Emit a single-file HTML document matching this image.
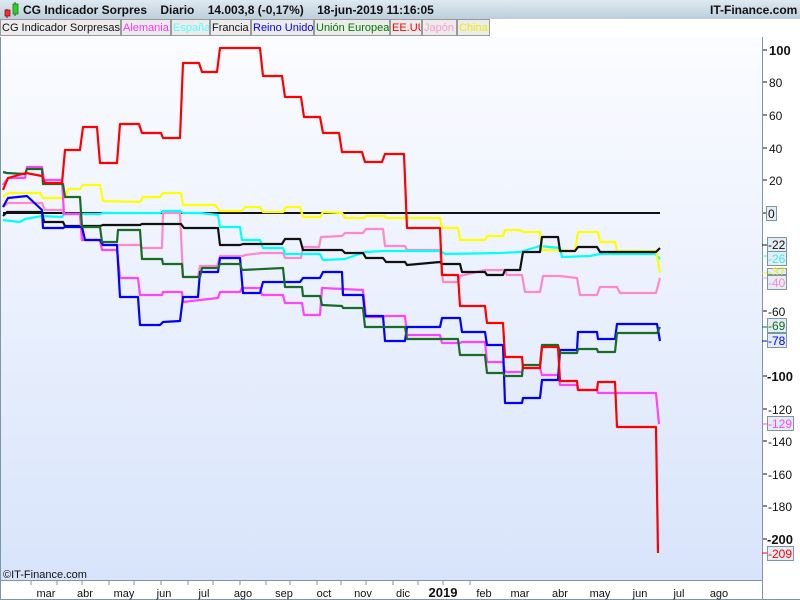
<!DOCTYPE html>
<html><head><meta charset="utf-8"><style>
html,body{margin:0;padding:0;width:800px;height:600px;overflow:hidden;background:#fff;font-family:"Liberation Sans",sans-serif}
#top{position:absolute;left:0;top:0;width:800px;height:19px;background:linear-gradient(#dfe9f1,#bccfdc);font-size:12px;font-weight:bold;color:#111;white-space:nowrap}
#leg{position:absolute;left:0;top:19px;width:800px;height:18px;background:#fff;font-size:11px;white-space:nowrap}
#leg span{position:absolute;top:0;height:17px;line-height:16px;border:1px solid #999;background:#ececec;padding:0 1px;box-sizing:border-box;overflow:hidden;white-space:nowrap}
</style></head><body>
<div id="top">
<svg width="20" height="19" style="position:absolute;left:2px;top:0"><line x1="5" y1="9" x2="5" y2="18" stroke="#600"/><rect x="3" y="10" width="5" height="6" fill="#e33" stroke="#800" stroke-width="0.7"/><line x1="13" y1="2" x2="13" y2="16" stroke="#060"/><rect x="11" y="4" width="5" height="10" fill="#3c3" stroke="#070" stroke-width="0.7"/></svg>
<span style="position:absolute;left:23px;top:3px">CG Indicador Sorpres &nbsp;&nbsp; Diario &nbsp;&nbsp; 14.003,8 (-0,17%) &nbsp;&nbsp; 18-jun-2019 11:16:05</span>
<span style="position:absolute;left:710px;top:3px">IT-Finance.com</span>
</div>
<div id="leg">
<span style="left:0;width:121px;color:#111">CG Indicador Sorpresas</span>
<span style="left:121px;width:50px;color:#f3f">Alemania</span>
<span style="left:171px;width:39px;color:#5ff">España</span>
<span style="left:210px;width:41px;color:#111">Francia</span>
<span style="left:251px;width:63px;color:#00f">Reino Unido</span>
<span style="left:314px;width:76px;color:#070">Unión Europea</span>
<span style="left:390px;width:32px;color:#f00">EE.UU</span>
<span style="left:422px;width:35px;color:#f9c">Japón</span>
<span style="left:457px;width:33px;color:#ee0">China</span>
</div>
<svg width="800" height="600" style="position:absolute;left:0;top:0" font-family="Liberation Sans, sans-serif">
<defs><linearGradient id="bg" x1="0" y1="0" x2="0" y2="1"><stop offset="0" stop-color="#fbfcff"/><stop offset="1" stop-color="#d8e4fb"/></linearGradient></defs>
<rect x="0" y="37" width="762" height="544" fill="url(#bg)"/>
<line x1="0.5" y1="37" x2="0.5" y2="600" stroke="#7b96a4"/>
<line x1="762.5" y1="37" x2="762.5" y2="600" stroke="#7b96a4"/>
<line x1="0" y1="580.5" x2="762" y2="580.5" stroke="#7b96a4"/>
<line x1="0" y1="599.5" x2="800" y2="599.5" stroke="#7b96a4"/>
<line x1="3" y1="213" x2="660" y2="213" stroke="#111" stroke-width="2"/>
<g fill="none" stroke-width="2.2" stroke-linejoin="round">
<polyline stroke="#ff88cc" points="3,207 8,203 42,203 45,210 62,210 64,214 80,214 82,240 100,240 102,245 140,245 142,248 162,248 163,213 180,213 183,277 198,277 200,266 217,266 220,256 243,256 245,255 262,253 283,253 285,258 301,258 303,247 319,247 321,237 342,236 345,233 363,233 366,229 383,229 385,246 405,246 407,250 440,250 443,282 458,282 460,276 485,270 505,270 507,275 522,275 525,292 540,292 543,276 560,276 577,278 580,295 597,295 600,287 617,287 620,293 656,293 660,278"/>
<polyline stroke="#00ffff" points="3,220 20,222 25,219 42,216 62,217 64,214 100,214 103,213 160,213 163,211 180,211 183,213 200,213 218,215 220,227 240,227 242,240 260,240 263,248 283,248 285,254 300,254 303,254 320,254 323,260 345,259 365,252 385,251 440,251 445,254 500,253 520,252 540,246 560,248 562,257 590,256 600,254 655,254 660,259"/>
<polyline stroke="#ffff00" points="3,197 8,193 40,193 43,198 65,198 68,189 80,189 83,185 100,185 103,201 140,202 143,197 160,197 163,193 181,193 183,205 215,205 220,211 242,211 245,207 260,207 263,212 283,212 286,207 300,207 303,217 320,217 323,212 342,213 345,218 364,218 366,216 384,216 386,218 440,218 442,228 458,228 460,240 485,240 487,236 503,236 505,230 520,230 523,232 540,232 542,250 575,251 578,232 598,232 600,242 615,242 617,251 656,251 660,273"/>
<polyline stroke="#111" points="3,216 7,212 42,212 44,222 63,222 65,226 100,226 103,225 140,225 142,224 181,224 184,228 218,228 220,245 240,245 243,244 282,244 285,239 300,239 303,250 342,250 345,253 363,253 366,258 383,258 386,262 405,262 407,265 440,262 442,264 460,264 462,272 485,272 487,275 503,275 505,270 520,270 523,252 540,252 542,237 558,237 560,251 575,251 578,247 597,247 600,252 656,252 660,248"/>
<polyline stroke="#ff44ff" points="3,185 8,178 25,178 27,167 42,167 44,180 62,180 64,214 80,214 82,240 100,240 102,250 117,250 120,278 138,278 140,295 162,295 163,292 182,292 183,302 200,300 218,298 220,292 240,292 242,288 260,288 262,295 283,295 285,303 302,303 304,315 320,315 322,288 363,290 366,317 383,317 385,316 405,316 407,335 440,335 442,343 460,343 462,342 485,342 487,362 503,362 505,372 522,372 523,368 540,368 542,375 558,375 560,385 577,385 578,390 597,390 598,393 656,393 659,424"/>
<polyline stroke="#0000ff" points="3,207 8,198 27,196 42,210 43,228 63,228 65,227 82,227 85,240 100,240 103,245 117,245 120,297 138,297 140,325 160,325 163,322 180,321 183,297 198,297 200,272 218,272 220,258 240,258 243,293 260,293 263,282 300,282 303,278 320,278 323,272 342,272 343,295 363,295 365,316 383,316 385,341 405,341 407,327 440,327 442,318 460,318 462,332 485,332 487,345 503,345 505,403 522,403 523,398 540,398 542,380 558,380 560,350 577,350 578,332 597,332 598,339 615,339 617,324 657,324 660,341"/>
<polyline stroke="#1a6b26" points="3,172 7,173 25,174 27,169 42,169 43,184 63,184 65,197 80,197 82,227 100,227 102,242 117,242 118,230 140,230 142,259 162,259 163,264 182,264 183,277 200,277 202,268 218,268 220,264 240,264 242,270 283,268 285,287 302,287 303,296 320,296 322,305 342,306 343,308 363,308 365,327 405,327 407,339 458,339 460,355 485,355 487,373 503,373 505,376 522,376 523,365 540,365 542,345 558,345 560,353 577,353 578,349 597,349 598,352 615,352 617,333 657,333 660,327"/>
<polyline stroke="#ff0000" points="3,190 8,178 26,173 42,176 45,183 62,183 65,150 80,150 83,127 97,127 100,163 117,163 120,124 139,124 142,133 161,133 163,138 180,138 183,63 199,63 202,72 217,72 220,48 260,48 263,76 282,76 285,97 301,97 304,117 320,117 323,133 339,133 342,152 362,152 365,162 382,162 385,154 404,154 407,228 440,228 442,275 458,275 460,306 485,306 487,323 503,323 505,357 522,357 523,368 540,368 542,347 558,347 560,381 577,381 578,390 597,390 598,382 615,382 617,427 656,427 658,553"/>
</g>
<g font-size="12" fill="#111">
<g stroke="#111">
<line x1="763" y1="50" x2="767" y2="50"/><line x1="763" y1="82" x2="767" y2="82"/><line x1="763" y1="115" x2="767" y2="115"/><line x1="763" y1="148" x2="767" y2="148"/><line x1="763" y1="180" x2="767" y2="180"/><line x1="763" y1="213" x2="767" y2="213"/><line x1="763" y1="245" x2="767" y2="245"/><line x1="763" y1="311" x2="767" y2="311"/><line x1="763" y1="376" x2="767" y2="376"/><line x1="763" y1="409" x2="767" y2="409"/><line x1="763" y1="441" x2="767" y2="441"/><line x1="763" y1="474" x2="767" y2="474"/><line x1="763" y1="506" x2="767" y2="506"/><line x1="763" y1="539" x2="767" y2="539"/>
</g>
<text x="769" y="55" font-weight="bold" font-size="13">100</text>
<text x="769" y="87">80</text><text x="769" y="120">60</text><text x="769" y="153">40</text><text x="769" y="185">20</text>
<text x="768" y="316">-60</text>
<text x="767" y="381" font-weight="bold" font-size="13">-100</text>
<text x="768" y="414">-120</text><text x="768" y="446">-140</text><text x="768" y="479">-160</text><text x="768" y="511">-180</text>
<text x="767" y="544" font-weight="bold" font-size="13">-200</text>
</g>
<g font-size="12" stroke-width="1">
<rect x="766.5" y="206.5" width="10" height="14" fill="#e4ecf4" stroke="#7b96a4"/><text x="768" y="218" fill="#111">0</text>
<rect x="767.5" y="237.5" width="19" height="14" fill="#e4ecf4" stroke="#7b96a4"/><text x="768" y="249" fill="#111">-22</text>
<rect x="767.5" y="251.5" width="19" height="14" fill="#e4ecf4" stroke="#7b96a4"/><text x="768" y="263" fill="#3ee">-26</text>
<rect x="767.5" y="268.5" width="19" height="6" fill="#e4ecf4" stroke="#7b96a4"/><text x="768" y="276" fill="#ee0">-37</text>
<rect x="767.5" y="275.5" width="19" height="14" fill="#e4ecf4" stroke="#7b96a4"/><text x="768" y="287" fill="#f8c">-40</text>
<rect x="767.5" y="318.5" width="19" height="14" fill="#e4ecf4" stroke="#7b96a4"/><text x="768" y="330" fill="#1a6b26">-69</text>
<rect x="767.5" y="333.5" width="19" height="14" fill="#e4ecf4" stroke="#7b96a4"/><text x="768" y="345" fill="#00f">-78</text>
<rect x="767.5" y="416.5" width="26" height="14" fill="#e4ecf4" stroke="#7b96a4"/><text x="768" y="428" fill="#f4f">-129</text>
<rect x="767.5" y="546.5" width="26" height="14" fill="#e4ecf4" stroke="#7b96a4"/><text x="768" y="558" fill="#f00">-209</text>
<line x1="762" y1="245" x2="767" y2="245" stroke="#111"/><line x1="762" y1="256" x2="767" y2="256" stroke="#3ee"/><line x1="762" y1="273" x2="767" y2="273" stroke="#ee0"/><line x1="762" y1="278" x2="767" y2="278" stroke="#f8c"/><line x1="762" y1="327" x2="767" y2="327" stroke="#1a6b26"/><line x1="762" y1="341" x2="767" y2="341" stroke="#00f"/><line x1="762" y1="424" x2="767" y2="424" stroke="#f4f"/><line x1="762" y1="553" x2="767" y2="553" stroke="#f00"/>
</g>
<text x="3" y="578" font-size="11" fill="#111">©IT-Finance.com</text>
<g stroke="#7b96a4">
<line x1="31" y1="581" x2="31" y2="585"/><line x1="57" y1="581" x2="57" y2="585"/><line x1="82" y1="581" x2="82" y2="585"/><line x1="109" y1="581" x2="109" y2="585"/><line x1="134" y1="581" x2="134" y2="585"/><line x1="161" y1="581" x2="161" y2="585"/><line x1="188" y1="581" x2="188" y2="585"/><line x1="213" y1="581" x2="213" y2="585"/><line x1="240" y1="581" x2="240" y2="585"/><line x1="266" y1="581" x2="266" y2="585"/><line x1="290" y1="581" x2="290" y2="585"/><line x1="317" y1="581" x2="317" y2="585"/><line x1="341" y1="581" x2="341" y2="585"/><line x1="366" y1="581" x2="366" y2="585"/><line x1="393" y1="581" x2="393" y2="585"/><line x1="418" y1="581" x2="418" y2="585"/><line x1="443" y1="581" x2="443" y2="585"/><line x1="470" y1="581" x2="470" y2="585"/>
</g>
<g font-size="11" fill="#111" text-anchor="middle">
<text x="46" y="597">mar</text><text x="85" y="597">abr</text><text x="124" y="597">may</text><text x="164" y="597">jun</text><text x="204" y="597">jul</text><text x="243" y="597">ago</text><text x="284" y="597">sep</text><text x="324" y="597">oct</text><text x="363" y="597">nov</text><text x="403" y="597">dic</text><text x="443" y="597" font-weight="bold" font-size="13">2019</text><text x="484" y="597">feb</text><text x="520" y="597">mar</text><text x="560" y="597">abr</text><text x="600" y="597">may</text><text x="640" y="597">jun</text><text x="679" y="597">jul</text><text x="719" y="597">ago</text>
</g>
</svg>
</body></html>
